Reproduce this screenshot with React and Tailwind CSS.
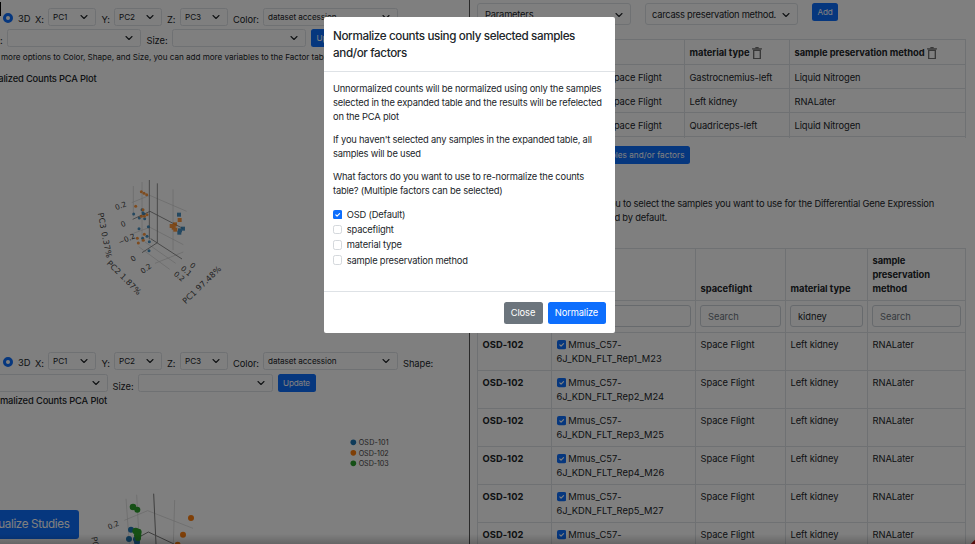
import React from "react";

const Chevron = ({ className }) => (
  <svg viewBox="0 0 16 16" className={className} fill="none" stroke="#212529" strokeWidth="2.200" strokeLinecap="round" strokeLinejoin="round">
    <path d="M2 5l6 6 6-6" />
  </svg>
);

const SmallSelect = ({ className, children }) => (
  <div className={`flex h-[18px] shrink-0 items-center justify-between rounded-[2.5px] border border-[#dee2e6] pl-1 text-[8.17px] tracking-[-0.08px] ${className}`}>
    <span className="whitespace-nowrap">{children}</span>
    <Chevron className="mr-[7px] h-2 w-2" />
  </div>
);

const Radio = () => (
  <div className="ml-[3px] h-[10px] w-[10px] shrink-0 rounded-full border-[3px] border-[#0d6efd] bg-white" />
);

const Label = ({ className, children }) => (
  <div className={`shrink-0 whitespace-nowrap leading-[14px] tracking-[-0.08px] ${className}`}>{children}</div>
);

const Axes = ({ children }) => (
  <div className="flex h-[18px] items-start">
    <Radio />
    <Label className="w-[22px] pl-[5px]">3D</Label>
    <Label className="w-[13px] pt-[5px]">X:</Label>
    <SmallSelect className="w-[48px]">PC1</SmallSelect>
    <Label className="w-[18px] pl-[5.5px] pt-[5px]">Y:</Label>
    <SmallSelect className="w-[48px]">PC2</SmallSelect>
    <Label className="w-[18px] pl-[5px] pt-[5px]">Z:</Label>
    <SmallSelect className="w-[48px]">PC3</SmallSelect>
    <Label className="w-[35px] pl-[5px] pt-[5px]">Color:</Label>
    <SmallSelect className="w-[135px]">dataset accession</SmallSelect>
    {children}
  </div>
);

const Check = ({ on }) =>
  on ? (
    <svg viewBox="0 0 28 28" className="h-[9.33px] w-[9.33px] shrink-0">
      <rect width="28" height="28" rx="6" fill="#0d6efd" />
      <path d="M8.500 14.500l3.700 3.700 7.500-7.500" fill="none" stroke="#fff" strokeWidth="3.600" strokeLinecap="round" strokeLinejoin="round" />
    </svg>
  ) : (
    <div className="h-[9.33px] w-[9.33px] shrink-0 rounded-[2.3px] border border-[#d4d8dc] bg-white" />
  );

const Trash = () => (
  <svg viewBox="0 0 30 38" className="mt-[2px] h-[12.6px] w-[10px]" fill="none" stroke="#707070" strokeWidth="4">
    <path d="M0 5.500h30M5 10h20v25H5z" />
    <path d="M10 2h10" />
  </svg>
);

const blue = "#1f77b4";
const orange = "#ff7f0e";
const green = "#2ca02c";

const lower = [
  [161, 132, blue], [186, 119, blue], [189, 128, blue], [178, 144, blue], [194, 146, blue], [192, 133, blue],
  [205, 170, blue], [177, 176, blue], [188, 205, blue], [201, 199, blue], [208, 215, blue], [207, 242, blue],
  [184, 65, orange], [192, 70, orange], [200, 74, orange], [167, 109, orange], [189, 119, orange],
  [184, 139, orange], [193, 139, orange], [201, 134, orange], [193, 193, orange], [172, 205, orange], [190, 211, orange], [175, 219, orange],
];
const squares = [
  [297, 134, blue], [299, 150, orange], [285, 163, orange], [275, 168, orange], [281, 173, orange], [286, 179, orange],
  [309, 176, blue], [300, 181, blue], [298, 188, blue],
];

const PlotOne = () => (
  <svg viewBox="0 0 480 420" className="ml-[80px] h-[140px] w-[160px]" fontFamily="'DejaVu Sans', sans-serif" fill="#444">
    <g stroke="#d0d0d0" strokeWidth="2" fill="none">
      <path d="M160 48v92M186 36v180M279 58v182M155 98l54-22 111 48M160 190l50-18 100 52M176 230l93 68M195 216l92 64M225 280l85-34" />
    </g>
    <g stroke="#7c7c7c" strokeWidth="2.500" fill="none">
      <path d="M208 30v178M232 40v178M158 148l52-24 100 52M186 248l46-30M212 206l94 61" />
    </g>
    <g opacity="0.8">
      {lower.map(([x, y, c], i) => <circle key={i} cx={x} cy={y} r="4.500" fill={c} />)}
      {squares.map(([x, y, c], i) => <rect key={i} x={x - 6} y={y - 6} width="12" height="12" fill={c} />)}
    </g>
    <g fontSize="22">
      <text transform="translate(109 121) rotate(-22)">0.2</text>
      <text transform="translate(126 172) rotate(-22)">0</text>
      <text transform="translate(119 225) rotate(-24)">−0.2</text>
      <text transform="translate(158 276) rotate(-35)">0</text>
      <text transform="translate(188 312) rotate(-35)">0.2</text>
      <text transform="translate(280 314) rotate(-320)">0.2</text>
      <text transform="translate(301 298) rotate(40)">0.1</text>
      <text transform="translate(328 288) rotate(40)">0</text>
    </g>
    <g fontSize="24">
      <text transform="translate(53 130) rotate(79)" textLength="137">PC3 0.37%</text>
      <text transform="translate(79 281) rotate(45)" textLength="134">PC2 1.87%</text>
      <text transform="translate(317 403) rotate(-44)" textLength="150">PC1 97.48%</text>
    </g>
  </svg>
);

const PlotTwo = () => (
  <svg viewBox="0 0 1050 342" className="ml-[60px] h-[114px] w-[350px]" fontFamily="'DejaVu Sans', sans-serif" fill="#444">
    <g stroke="#d0d0d0" strokeWidth="2" fill="none">
      <path d="M198 206l10 136M230 194l8 148M344 210l-4 132M193 271l70-29 136 53" />
    </g>
    <path d="M281 191l7 151M236 322l29-16 77 36" stroke="#7c7c7c" strokeWidth="3" fill="none" />
    <g fill={blue}>
      <circle cx="213" cy="299" r="9" /><circle cx="207" cy="327" r="9" /><circle cx="228" cy="328" r="9" /><circle cx="231" cy="336" r="9" />
    </g>
    <g fill={green}>
      <circle cx="219" cy="231" r="10" /><circle cx="232" cy="239" r="9" />
      <circle cx="227" cy="303" r="10" /><circle cx="235" cy="306" r="10" /><circle cx="233" cy="316" r="11" /><circle cx="234" cy="325" r="9" />
    </g>
    <g fill={orange}>
      <circle cx="393" cy="264" r="9" /><circle cx="369" cy="314" r="9" /><circle cx="353" cy="344" r="9" />
    </g>
    <text transform="translate(147 299) rotate(-22)" fontSize="22">0.2</text>
    <text transform="translate(94 322) rotate(79)" fontSize="24">PC</text>
    {[["OSD-101", 37, blue], ["OSD-102", 68.5, orange], ["OSD-103", 100, green]].map(([t, y, c]) => (
      <g key={t}>
        <circle cx="880" cy={y} r="8.500" fill={c} />
        <text x="896" y={y + 8} fontSize="21.500" textLength="90" fontFamily="Inter, sans-serif">{t}</text>
      </g>
    ))}
  </svg>
);

const Button = ({ className, children }) => (
  <div className={`flex h-[18px] shrink-0 items-center justify-center whitespace-nowrap rounded-[2.5px] bg-[#0d6efd] text-[8.17px] text-white ${className}`}>{children}</div>
);

const LeftPane = () => (
  <div className="flex h-full w-[470px] shrink-0 flex-col overflow-hidden border-r border-[#555] pt-[8px]">
    <div className="[&>div>div:nth-child(1)]:mt-[5px] [&>div>div:nth-child(2)]:mt-[4px]">
      <Axes />
    </div>
    <div className="mt-[3px] flex h-[18px]">
      <Label className="w-[7px] pt-[5px]">:</Label>
      <SmallSelect className="w-[134px]" />
      <Label className="w-[30.5px] pl-[5.5px] pt-[5px]">Size:</Label>
      <SmallSelect className="w-[134.500px]" />
      <Button className="ml-[5px] w-[38px]">Update</Button>
    </div>
    <div className="mt-[4px] whitespace-nowrap pl-px text-[8.17px] leading-[12px] tracking-[-0.045px]">
      more options to Color, Shape, and Size, you can add more variables to the Factor table
    </div>
    <div className="mt-[9px] flex w-[96.5px] justify-end whitespace-nowrap font-medium leading-[14px] tracking-[-0.17px]">alized Counts PCA Plot</div>
    <div className="mt-[84px] h-[140px]"><PlotOne /></div>
    <div className="mt-[42px] [&>div>div:nth-child(1)]:mt-[5px] [&>div>div:nth-child(2)]:mt-[4px]">
      <Axes><Label className="pl-[5px] pt-[5px]">Shape:</Label></Axes>
    </div>
    <div className="mt-[4px] flex h-[18px]">
      <SmallSelect className="-ml-[27px] w-[134.500px]" />
      <Label className="w-[30px] pl-[5px] pt-[5.5px]">Size:</Label>
      <SmallSelect className="w-[135px]" />
      <Button className="ml-[5px] w-[38px]">Update</Button>
    </div>
    <div className="mt-[2px] flex w-[107px] justify-end whitespace-nowrap font-medium leading-[14px] tracking-[-0.14px]">malized Counts PCA Plot</div>
    <div className="mt-[22px] h-[114px]"><PlotTwo /></div>
  </div>
);

const line = "border-[#dee2e6]";

const factors = [
  ["Space Flight", "Gastrocnemius-left", "Liquid Nitrogen"],
  ["Space Flight", "Left kidney", "RNALater"],
  ["Space Flight", "Quadriceps-left", "Liquid Nitrogen"],
];
const samples = ["Rep1_M23", "Rep2_M24", "Rep3_M25", "Rep4_M26", "Rep5_M27", "Rep6_M28"];

const Field = ({ className, children }) => (
  <div className={`flex h-[22px] items-center rounded-[3px] border border-[#ced4da] pl-[7px] pt-[2px] tracking-[-0.05px] ${className}`}>{children}</div>
);

const RightPane = () => (
  <div className="h-full min-w-0 flex-1 overflow-hidden pl-[7px] pt-[3px]">
    <div className="flex items-start">
      <div className={`flex h-[22px] w-[154px] items-center justify-between rounded-[3px] border ${line} pl-[7px] pr-[7px] pt-[1px] tracking-[-0.2px]`}>
        Parameters<Chevron className="h-2 w-2" />
      </div>
      <div className={`ml-[14px] flex h-[22px] w-[153px] items-center justify-between rounded-[3px] border ${line} pl-[6px] pr-[7px] pt-[1px]`}>
        <span className="whitespace-nowrap tracking-[-0.26px]">carcass preservation method.</span><Chevron className="h-2 w-2" />
      </div>
      <Button className="ml-[14px] w-[26px]">Add</Button>
    </div>

    <div className={`mt-[14px] w-[489px] border-l border-t ${line} tracking-[-0.09px]`}>
      <div className={`grid h-[25px] grid-cols-[207px_105px_176px] border-b ${line} font-bold tracking-normal`}>
        <div className={`border-r ${line}`} />
        <div className={`flex items-center gap-[2px] border-r ${line} pl-[4.500px]`}><span className="pt-px">material type</span><Trash /></div>
        <div className={`flex items-center gap-[2px] border-r ${line} pl-[4.500px] tracking-[-0.02px]`}><span className="pt-px">sample preservation method</span><Trash /></div>
      </div>
      {factors.map((r, i) => (
        <div key={i} className={`grid h-[24px] grid-cols-[207px_105px_176px] items-stretch border-b ${line} leading-[25px]`}>
          <div className={`border-r ${line} pl-[130px]`}>{r[0]}</div>
          <div className={`border-r ${line} pl-[4.500px]`}>{r[1]}</div>
          <div className={`border-r ${line} pl-[4.500px]`}>{r[2]}</div>
        </div>
      ))}
    </div>

    <Button className="ml-[100px] mt-[9px] w-[112.500px] justify-end pr-[5px] pt-[1px] tracking-[0.05px]">samples and/or factors</Button>

    <div className="mt-[33px] whitespace-nowrap leading-[14px]">
      <div className="flex w-[457px] justify-end">you to select the samples you want to use for the Differential Gene Expression</div>
      <div className="flex w-[190px] justify-end">selected by default.</div>
    </div>

    <div className={`mt-[23px] w-[489px] border-l border-t ${line}`}>
      <div className={`grid h-[52px] grid-cols-[74px_144px_90px_82px_98px] items-stretch border-b ${line} font-bold leading-[14px] tracking-normal`}>
        <div className={`border-r ${line}`} />
        <div className={`border-r ${line}`} />
        <div className={`flex items-end border-r ${line} pb-[4px] pl-[4.500px]`}>spaceflight</div>
        <div className={`flex items-end border-r ${line} pb-[4px] pl-[4.500px]`}>material type</div>
        <div className={`flex items-end border-r ${line} pb-[4px] pl-[4.500px] tracking-[-0.05px]`}>sample<br />preservation<br />method</div>
      </div>
      <div className={`grid h-[32px] grid-cols-[74px_144px_90px_82px_98px] border-b ${line}`}>
        <div className={`border-r ${line} px-[4px] pt-[4px]`}><Field /></div>
        <div className={`border-r ${line} px-[4px] pt-[4px]`}><Field /></div>
        <div className={`border-r ${line} px-[4px] pt-[4px]`}><Field className="text-[#6c757d]">Search</Field></div>
        <div className={`border-r ${line} px-[4px] pt-[4px]`}><Field>kidney</Field></div>
        <div className={`border-r ${line} px-[4px] pt-[4px]`}><Field className="text-[#6c757d]">Search</Field></div>
      </div>
      {samples.map((s) => (
        <div key={s} className={`grid h-[38px] grid-cols-[74px_144px_90px_82px_98px] border-b ${line} leading-[14px] tracking-[-0.07px] [&>div]:pl-[4.500px] [&>div]:pt-[5px]`}>
          <div className={`border-r ${line} font-bold tracking-[0.05px]`}>OSD-102</div>
          <div className={`border-r ${line} tracking-[0.03px]`}>
            <div className="flex items-center gap-[2.500px]"><Check on /><span>Mmus_C57-</span></div>
            <div>6J_KDN_FLT_{s}</div>
          </div>
          <div className={`border-r ${line}`}>Space Flight</div>
          <div className={`border-r ${line}`}>Left kidney</div>
          <div className={`border-r ${line}`}>RNALater</div>
        </div>
      ))}
    </div>
  </div>
);

const Modal = () => (
  <div className="absolute left-[323.5px] top-[17px] flex h-[316px] w-[291.5px] flex-col rounded-[2px] bg-white">
    <div className="h-[54.500px] whitespace-nowrap border-b border-[#dee2e6] px-[9.5px] pt-[10.500px] text-[11.67px] font-medium leading-[17.5px] tracking-[-0.37px]">
      <div>Normalize counts using only selected samples</div>
      <div>and/or factors</div>
    </div>
    <div className="h-[219.500px] px-[9.5px] pt-[10px] leading-[14px]">
      <p className="whitespace-nowrap">Unnormalized counts will be normalized using only the samples<br />selected in the expanded table and the results will be refelected<br />on the PCA plot</p>
      <p className="mt-[9.5px] whitespace-nowrap">If you haven't selected any samples in the expanded table, all<br />samples will be used</p>
      <p className="mt-[9px] whitespace-nowrap">What factors do you want to use to re-normalize the counts<br />table? (Multiple factors can be selected)</p>
      <div className="mt-[9px]">
        {["OSD (Default)", "spaceflight", "material type", "sample preservation method"].map((t, i) => (
          <div key={t} className="flex h-[15.2px] items-center gap-[4.500px]"><Check on={i === 0} /><span className="pt-px">{t}</span></div>
        ))}
      </div>
    </div>
    <div className="flex flex-1 items-center justify-end gap-[5px] border-t border-[#dee2e6] pr-[9.5px] tracking-[-0.08px] text-white">
      <div className="flex h-[22px] w-[39px] items-center justify-center rounded-[2.5px] bg-[#6c757d] pt-px">Close</div>
      <div className="flex h-[22px] w-[58px] items-center justify-center rounded-[2.5px] bg-[#0d6efd] pt-px tracking-[-0.15px]">Normalize</div>
    </div>
  </div>
);

export default function App() {
  return (
    <div className="relative flex h-[544px] w-[975px] overflow-hidden bg-white font-['Inter',sans-serif] text-[9.33px] tracking-[-0.19px] text-[#212529]">
      <LeftPane />
      <RightPane />
      <div className="absolute left-0 top-[2px] h-[14px] w-px bg-black" />
      <div className="absolute left-0 top-[510px] flex h-[28.500px] w-[79px] items-center justify-end rounded-r-[3px] bg-[#0d6efd] pr-[9.500px] pt-[1px] text-[11.67px] tracking-[-0.38px] text-white">
        <span className="whitespace-nowrap">ualize Studies</span>
      </div>
      <div className="absolute -bottom-[3px] -right-[3px] h-[6px] w-[6px] rotate-45 bg-[#d32020]" />
      <div className="absolute inset-0 bg-black/50" />
      <div className="absolute inset-x-0 bottom-0 h-[10px] bg-gradient-to-b from-transparent to-black/20" />
      <Modal />
    </div>
  );
}
